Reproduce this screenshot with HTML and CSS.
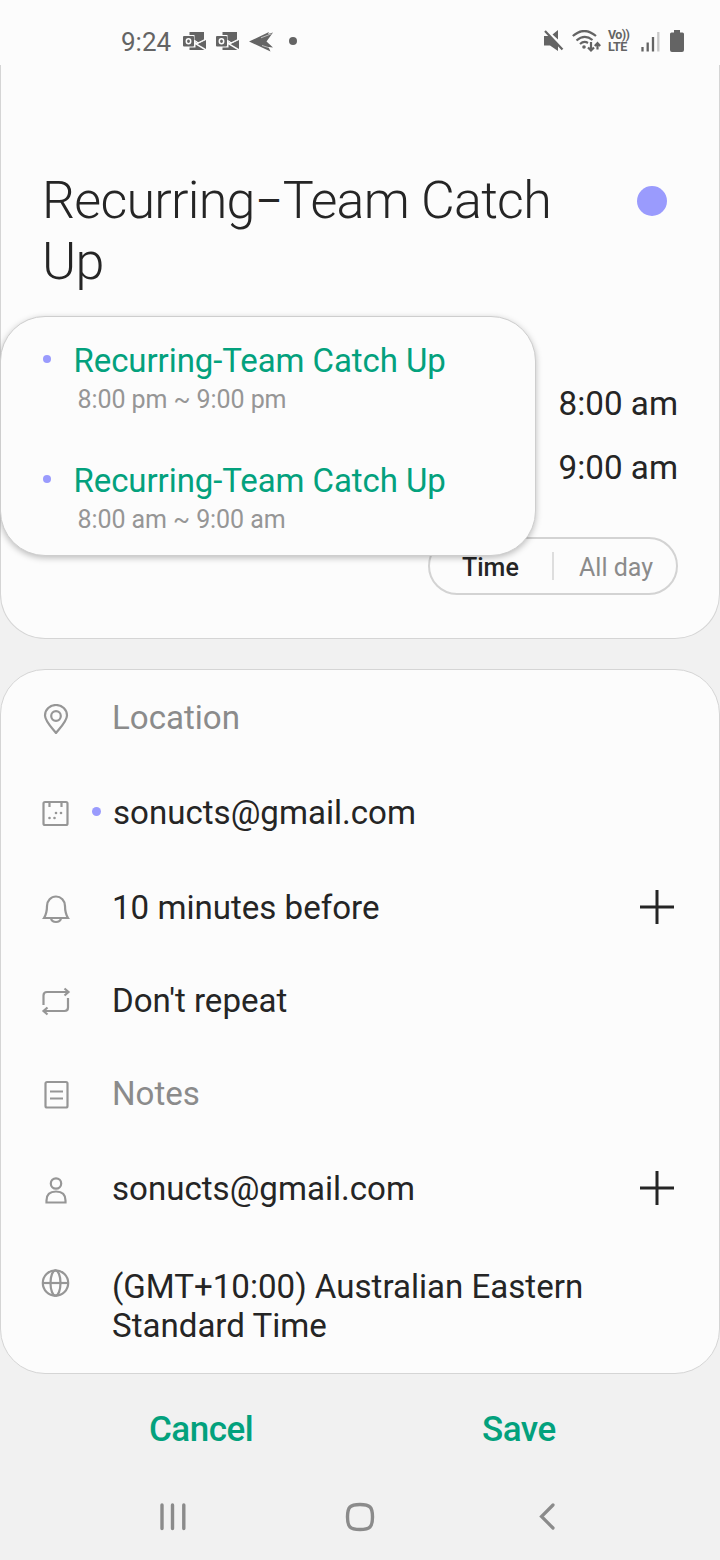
FILE: index.html
```html
<!DOCTYPE html>
<html lang="en">
<head>
<meta charset="utf-8">
<title>Edit event</title>
<link rel="stylesheet" href="styles.css">
</head>
<body>
<svg class="defs" width="0" height="0">
  <symbol id="outlook" viewBox="0 0 24 20">
    <path d="M6.500 1h14.500v8.500L14 12 12.500 11V4H6.500z" fill="#646464"/>
    <path d="M14.500 13L23 9v9z" fill="#646464"/>
    <path d="M6.500 16.500h6v-3l9 5.500H6.500z" fill="#646464"/>
    <path d="M12 9.500l3 2.500 7-3.500" fill="none" stroke="#fcfcfc" stroke-width="1.200"/>
    <path d="M11.500 4h3v6l-3 -1z" fill="#646464"/>
    <rect x="0" y="5" width="11" height="10.500" rx="1" fill="#646464"/>
    <ellipse cx="5.500" cy="10.200" rx="2.200" ry="2.500" fill="none" stroke="#fcfcfc" stroke-width="1.500"/>
  </symbol>
  <symbol id="plus" viewBox="0 0 34 34">
    <path d="M17 0v34M0 17h34" stroke="#252525" stroke-width="3" fill="none"/>
  </symbol>
</svg>
<div class="phone">
  <header class="status">
    <span class="clock">9:24</span>
    <svg class="mail" width="24" height="20"><use href="#outlook"/></svg>
    <svg class="mail second" width="24" height="20"><use href="#outlook"/></svg>
    <svg class="send" width="25" height="21" viewBox="0 0 25 21"><path d="M0 10.500L20 1 19 3 24 1.500 17.500 10.500 24 16.500 19.500 16 21.500 20.500z" fill="#646464"/><path d="M12 6.800L22.500 2.800M13 14.500l8 2.500" stroke="#fcfcfc" stroke-width=".6"/></svg>
    <i class="more"></i>
    <div class="system">
      <svg width="20" height="22" viewBox="0 0 20 22"><path d="M0 6h5l9 8.500V21L6 15.500H0zM14 0v9.500L8.500 4.500z" fill="#646464"/><path d="M1 1L18.500 19.500" stroke="#646464" stroke-width="2.200"/></svg>
      <svg class="wifi" width="29" height="23" viewBox="0 0 29 23"><g fill="none" stroke="#646464" stroke-width="2.200"><path d="M.8 6Q12.200 -4 24 6M4.500 10.500Q12.500 3.500 20.500 10M8 14Q12 10.500 16 13"/><path d="M19 12v8.500M16 17.500l3 3 3-3M25.500 19.500v-6M22.800 16l2.700-2.800 2.700 2.800"/></g><circle cx="12" cy="17" r="1.800" fill="#646464"/></svg>
      <div class="volte"><span class="vo">Vo))</span><span class="lte">LTE</span></div>
      <svg class="signal" width="19" height="21" viewBox="0 0 19 21"><path d="M1.500 20.500v-4.500M6.700 20.500V11.500M12 20.500V6" stroke="#646464" stroke-width="2.300"/><path d="M17.300 20.500V1" stroke="#c8c8c8" stroke-width="2.300"/></svg>
      <svg class="battery" width="14" height="22" viewBox="0 0 14 22"><path d="M4 0h6v2.500h2.500q1.500 0 1.500 1.500v16q0 2-2 2H2q-2 0-2-2V4q0-1.500 1.500-1.500H4z" fill="#646464"/></svg>
    </div>
  </header>

  <section class="event">
    <div class="heading">
      <h1>Recurring<span class="dash">–</span>Team Catch Up</h1>
      <span class="color"></span>
    </div>
    <div class="times"><span>8:00 am</span><span>9:00 am</span></div>
    <div class="toggle"><span class="on">Time</span><i></i><span class="off">All day</span></div>
    <div class="popup">
      <div class="entry"><i class="dot"></i><div><b>Recurring-Team Catch Up</b><small>8:00 pm ~ 9:00 pm</small></div></div>
      <div class="entry"><i class="dot"></i><div><b>Recurring-Team Catch Up</b><small>8:00 am ~ 9:00 am</small></div></div>
    </div>
  </section>

  <section class="details">
    <div class="row location hint">
      <svg class="icon" viewBox="0 0 30 30"><path d="M15 29C11 24 4 17 4 11.500A11 10.500 0 0 1 26 11.500C26 17 19 24 15 29z"/><circle cx="15" cy="12" r="4.800"/></svg>
      <span class="label">Location</span>
    </div>
    <div class="row calendar">
      <svg class="icon" viewBox="0 0 30 30"><rect x="2.500" y="3" width="24" height="23" rx="1.500"/><path d="M8.500 3v5M20.500 3v5"/><g class="solid"><circle cx="15" cy="14" r="1.300"/><circle cx="20" cy="14" r="1.300"/><circle cx="8.500" cy="19" r="1.300"/><circle cx="13.500" cy="19" r="1.300"/></g></svg>
      <i class="dot"></i><span class="label">sonucts@gmail.com</span>
    </div>
    <div class="row reminder">
      <svg class="icon" viewBox="0 0 30 30"><path d="M3 24C5.500 20 6 17 6 12A9 9.500 0 0 1 24 12C24 17 24.500 20 27 24zM10 24.500q1 3.500 5 3.500t5-3.500"/></svg>
      <span class="label">10 minutes before</span>
      <svg class="plus"><use href="#plus"/></svg>
    </div>
    <div class="row repeat">
      <svg class="icon" viewBox="0 0 30 30"><path d="M2.500 18V8.500q0-3.500 3.500-3.500H27M23.500 1.500L27.500 5l-4 3.500M27 11v9.500q0 3.500-3.500 3.500H3M6.500 20.500L2.500 24l4 3.500"/></svg>
      <span class="label">Don't repeat</span>
    </div>
    <div class="row notes hint">
      <svg class="icon" viewBox="0 0 30 30"><rect x="4.500" y="2" width="22" height="25.500" rx="1.500"/><path d="M9 11.500h13M9 18.500h13"/></svg>
      <span class="label">Notes</span>
    </div>
    <div class="row guest">
      <svg class="icon" viewBox="0 0 30 30"><circle cx="15" cy="8.500" r="5.200"/><path d="M5.500 27.500V25.500C5.500 19.500 9 16.500 15 16.500s9.500 3 9.500 9v2z"/></svg>
      <span class="label">sonucts@gmail.com</span>
      <svg class="plus"><use href="#plus"/></svg>
    </div>
    <div class="row zone">
      <svg class="icon" viewBox="0 0 30 30"><circle cx="14.500" cy="14" r="12.700"/><ellipse cx="14.500" cy="14" rx="5" ry="12.700"/><path d="M2 14h25"/></svg>
      <span class="label">(GMT+10:00) Australian Eastern<br>Standard Time</span>
    </div>
  </section>

  <div class="actions"><span class="cancel">Cancel</span><span class="save">Save</span></div>
  <nav>
    <svg width="26" height="28" viewBox="0 0 26 28"><path d="M2 2v23.500M12.500 2v23.500M23.800 2v23.500" stroke="#8b8b8b" stroke-width="3.400" stroke-linecap="round"/></svg>
    <svg class="home" width="30" height="30" viewBox="0 0 30 30"><path d="M15 2.500C25 2.500 27.500 5 27.500 15S25 27.500 15 27.500 2.500 25 2.500 15 5 2.500 15 2.500z" fill="none" stroke="#8b8b8b" stroke-width="3.400"/></svg>
    <svg width="16" height="28" viewBox="0 0 16 28"><path d="M14 2L2.500 13.500 14 25" fill="none" stroke="#8b8b8b" stroke-width="3.200" stroke-linecap="round"/></svg>
  </nav>
</div>
</body>
</html>
```
FILE: styles.css
```css
* { box-sizing: border-box; }
body { margin: 0; background: #f1f1f1; color: #252525; font-family: Roboto, sans-serif; }
svg { display: block; flex: none; }
.defs { position: absolute; }
.phone { width: 720px; height: 1560px; overflow: hidden; display: flex; flex-direction: column; }
.status { height: 65px; flex: none; background: #fcfcfc; display: flex; align-items: center; padding: 17px 36px 0 121px; color: #646464; }
.clock { font-size: 26px; width: 62px; padding-top: 1px; }
.second { margin-left: 9px; }
.send { margin-left: 9px; }
.more { width: 8px; height: 8px; border-radius: 50%; background: #646464; margin-left: 15px; }
.system { display: flex; align-items: center; margin-left: auto; }
.wifi { margin-left: 8px; }
.volte { width: 22px; margin-left: 7px; display: flex; flex-direction: column; font-size: 12.500px; line-height: 12px; font-weight: 700; white-space: nowrap; }
.vo { letter-spacing: -.6px; }
.lte { letter-spacing: -.4px; }
.signal { margin-left: 11px; }
.battery { margin-left: 10px; }

.event { position: relative; height: 574px; flex: none; background: #fcfcfc; border: 1px solid #d5d5d5; border-top: 0; border-radius: 0 0 45px 45px; padding: 105px 41px 0 41px; display: flex; flex-direction: column; }
.heading { display: flex; justify-content: space-between; height: 201px; }
h1 { margin: 0; width: 530px; font-size: 52px; line-height: 61px; font-weight: 300; letter-spacing: -.75px; }
.dash { font-size: 41px; line-height: 1; vertical-align: 3px; font-weight: 400; letter-spacing: 0; margin-left: 1px; }
.color { width: 30px; height: 30px; border-radius: 50%; background: #9a9bfd; margin: 16px 11px 0 0; }
.times { display: flex; flex-direction: column; align-items: flex-end; font-size: 33.200px; line-height: 64px; height: 165px; margin-top: 1px; }
.toggle { align-self: flex-end; width: 250px; height: 58px; border: 2px solid #d3d3d3; border-radius: 29px; display: flex; align-items: center; font-size: 25px; }
.toggle span { padding-top: 2px; }
.toggle .on { width: 122px; padding-left: 32px; font-weight: 500; }
.toggle i { width: 2px; height: 28px; background: #dedede; }
.toggle .off { padding-left: 25px; color: #8b8b8b; }
.popup { position: absolute; left: -1px; top: 251px; width: 536px; height: 240px; border: 1px solid #cecece; border-radius: 45px; background: #fcfcfc; box-shadow: 0 2px 6px rgba(0,0,0,.25); }
.entry { height: 120px; display: flex; padding: 24px 0 0 42px; }
.dot { flex: none; width: 8px; height: 8px; border-radius: 50%; background: #9a9bfd; }
.entry .dot { margin: 14px 22.500px 0 0; }
.entry b { display: block; font-size: 33px; letter-spacing: -.08px; line-height: 40px; font-weight: 400; color: #03a17d; white-space: nowrap; }
.entry small { display: block; font-size: 25px; letter-spacing: -.07px; line-height: 38px; padding-left: 4px; color: #969696; }

.details { height: 705px; flex: none; margin-top: 30px; background: #fcfcfc; border: 1px solid #d5d5d5; border-radius: 45px; padding: 0 45px 0 40px; }
.row { height: 94px; display: flex; align-items: center; font-size: 33.100px; line-height: 40px; }
.icon { width: 30px; height: 30px; margin: 2px 41px 0 0; fill: none; stroke: #969696; stroke-width: 2.200; }
.icon .solid { fill: #969696; stroke: none; }
.hint { color: #8b8b8b; }
.location { height: 96px; }
.calendar .icon { margin-right: 21px; }
.calendar .dot { width: 9px; height: 9px; margin: 0 12px 3px 0; }
.reminder { height: 95px; }
.repeat { height: 92px; }
.guest { height: 95px; }
.plus { width: 34px; height: 34px; margin: 0 0 2px auto; }
.zone { height: 137px; align-items: flex-start; padding-top: 31px; line-height: 39px; }

.actions { height: 112px; flex: none; display: flex; font-size: 35px; line-height: 112px; font-weight: 500; color: #03a17d; letter-spacing: -.5px; padding-left: 149px; }
.cancel { width: 333px; }
nav { display: flex; align-items: center; padding: 16px 165px 0 160px; justify-content: space-between; }
.home { margin-right: 6px; }
```
